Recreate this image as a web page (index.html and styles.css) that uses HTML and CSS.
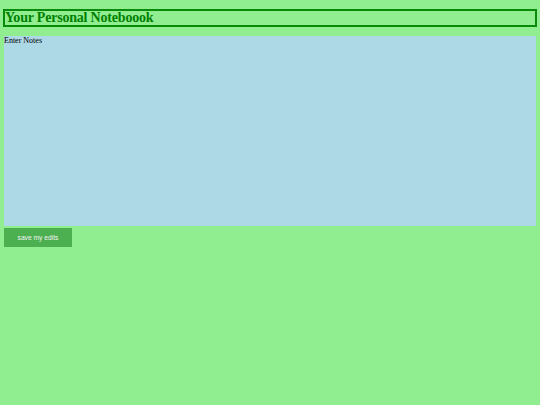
FILE: index.html
```html
<!DOCTYPE html>
<html>
<head>
<meta charset="utf-8">
<title>Notebook</title>
<link rel="stylesheet" href="styles.css">
</head>
<body>
<h1 class="title">Your Personal Noteboook</h1>
<div class="notes">Enter Notes</div>
<button class="save">save my edits</button>
</body>
</html>
```
FILE: styles.css
```css
html, body {
  margin: 0;
  padding: 0;
  background: #90ee90;
}
body {
  padding: 9px 3px 0 3px;
  font-family: "Liberation Serif", "Times New Roman", serif;
}
.title {
  margin: 0;
  border: 2px solid #0a8a0a;
  color: #008000;
  font-size: 14px;
  letter-spacing: -0.2px;
  line-height: 14px;
  font-weight: bold;
  padding: 0;
}
.notes {
  margin: 9px 1px 0 1px;
  height: 190px;
  background: #add8e6;
  font-size: 8px;
  line-height: 9px;
  color: #000;
}
.save {
  display: block;
  margin: 2px 0 0 1px;
  width: 68px;
  height: 19px;
  border: none;
  background: #4caf50;
  color: #f2f2f2;
  font-family: "Liberation Sans", Arial, sans-serif;
  font-size: 6.7px;
  font-weight: normal;
  padding: 0;
}
```
